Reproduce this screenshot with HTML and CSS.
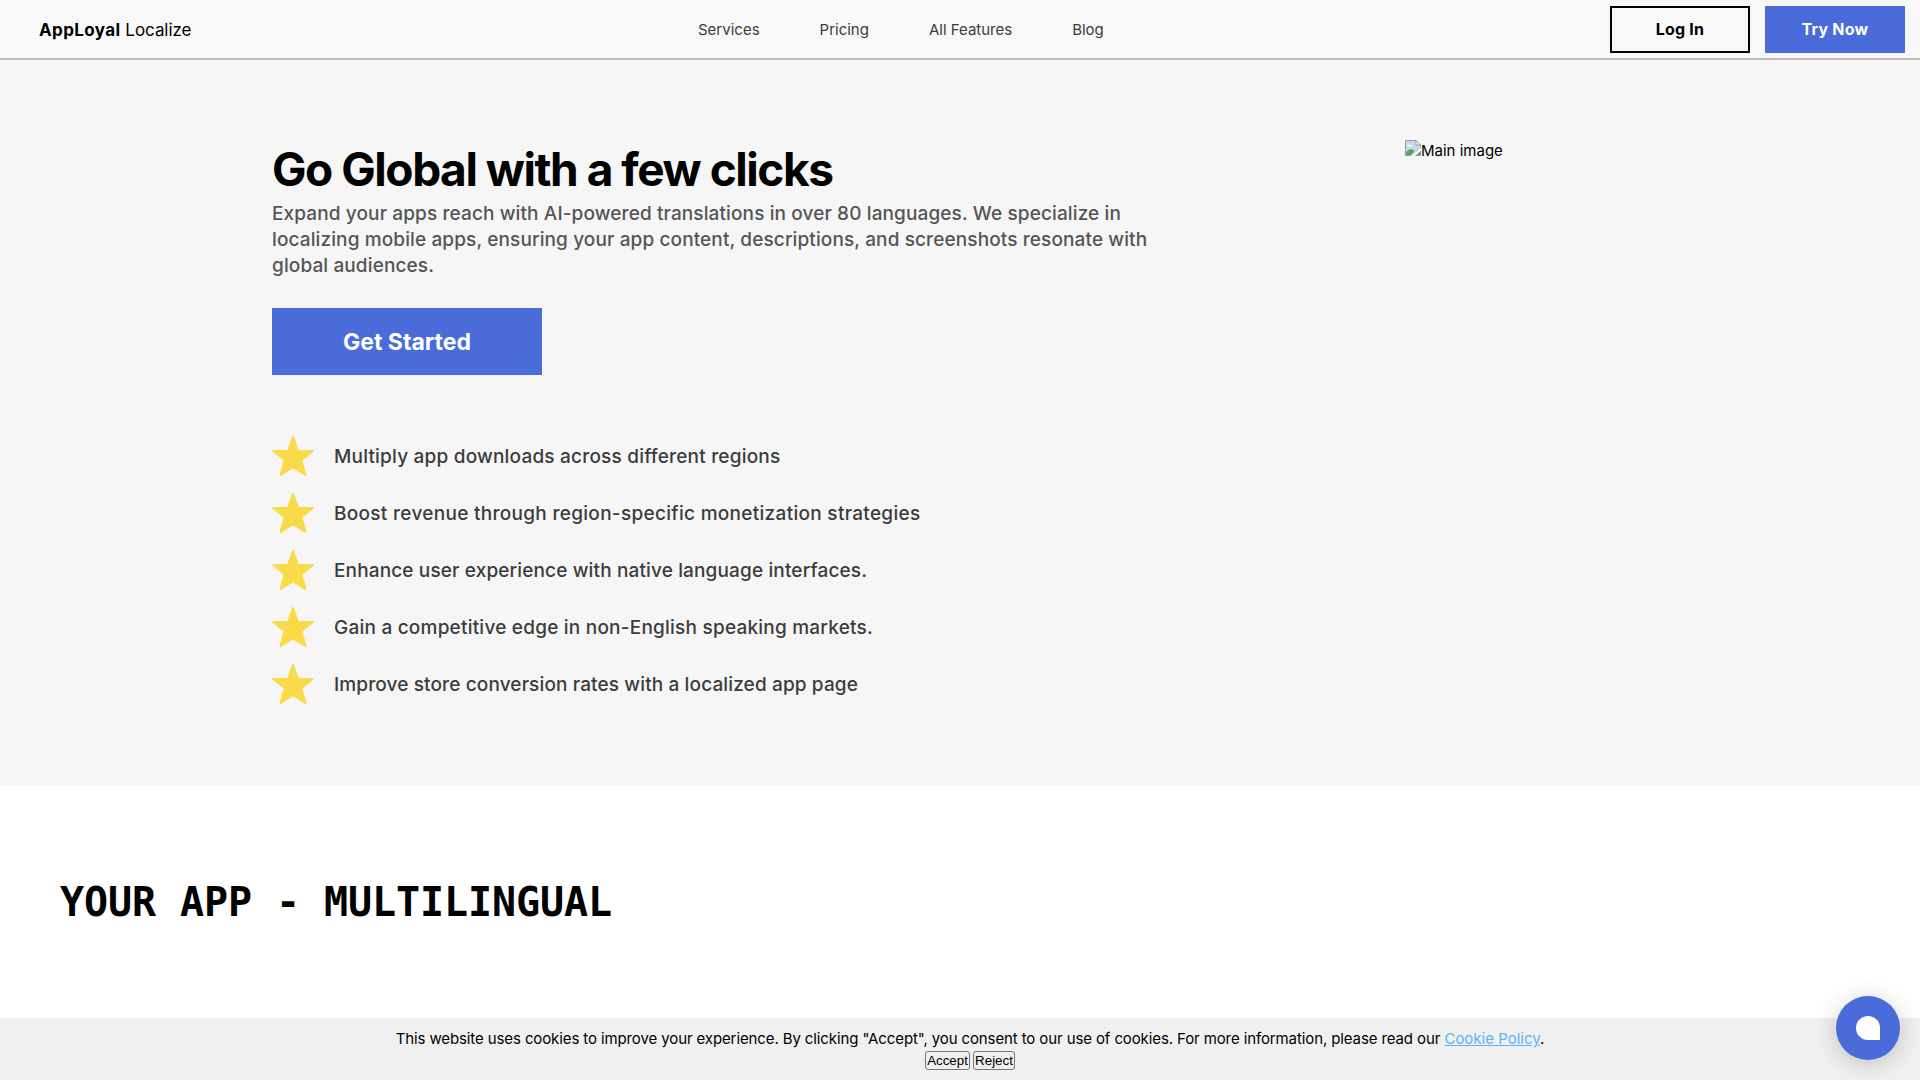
FILE: index.html
```
<!DOCTYPE html>
<html lang="en">
<head>
<meta charset="utf-8">
<title>AppLoyal Localize</title>
<link rel="stylesheet" href="styles.css">
</head>
<body>
<svg class="defs" width="0" height="0" aria-hidden="true">
  <symbol id="star" viewBox="0 0 42 40"><path d="M21 1.200 25.900 15H40.800L29.200 24.100 33.400 38.800 21 31 8.600 38.800 12.800 24.100 1.200 15H16.100Z" fill="#f9db4a" stroke="#f9db4a" stroke-width="2.2" stroke-linejoin="round"/></symbol>
</svg>
<header class="topbar">
  <a class="logo"><b>AppLoyal</b> <span>Localize</span></a>
  <nav class="nav"><a>Services</a><a>Pricing</a><a>All Features</a><a>Blog</a></nav>
  <div class="actions"><a class="btn btn-outline">Log In</a><a class="btn btn-solid">Try Now</a></div>
</header>
<main>
  <section class="hero">
    <div class="hero-copy">
      <h1>Go Global with a few clicks</h1>
      <p class="lead"><span class="l1">Expand your apps reach with AI-powered translations in over 80 languages. We specialize in</span><br><span class="l2">localizing mobile apps, ensuring your app content, descriptions, and screenshots resonate with</span><br><span class="l3">global audiences.</span></p>
      <a class="cta">Get Started</a>
      <ul class="features">
        <li><svg><use href="#star"/></svg><span class="f1">Multiply app downloads across different regions</span></li>
        <li><svg><use href="#star"/></svg><span class="f2">Boost revenue through region-specific monetization strategies</span></li>
        <li><svg><use href="#star"/></svg><span class="f3">Enhance user experience with native language interfaces.</span></li>
        <li><svg><use href="#star"/></svg><span class="f4">Gain a competitive edge in non-English speaking markets.</span></li>
        <li><svg><use href="#star"/></svg><span class="f5">Improve store conversion rates with a localized app page</span></li>
      </ul>
    </div>
    <div class="hero-image">
      <svg width="16" height="16" viewBox="0 0 16 16"><path d="M.5.5H11L15.500 5V15.500H.5Z" fill="#c5d7f5"/><path d="M2.500 6.500c0-2 2-2.500 2.800-1.200 1.500-.3 2 .5 2 1.200Z" fill="#fff"/><path d="M1 15v-2.500C4 8.500 7 8.500 9.500 11L6 15Z" fill="#5aa845"/><path d="M16 7.500 7.500 15.900H9.500L16 10.500Z" fill="#fff"/><path d="M11.500 15 15 11.500V15Z" fill="#5aa845"/><path d="M11 .5V5h4.500Z" fill="#fff"/><path d="M16 5H11V.5H.5v15H6M11 .5 15.500 5V8M10.500 15.500h5V11" fill="none" stroke="#999"/></svg><span>Main image</span>
    </div>
  </section>
  <section class="multilingual"><h2>YOUR APP - MULTILINGUAL</h2></section>
</main>
<div class="cookies">
  <p><span class="notice">This website uses cookies to improve your experience. By clicking "Accept", you consent to our use of cookies. For more information, please read our</span> <a>Cookie Policy</a>.</p>
  <div class="choices"><button class="accept">Accept</button><button class="reject">Reject</button></div>
</div>
<div class="chat"><i></i></div>
</body>
</html>
```
FILE: styles.css
```
* { box-sizing: border-box; }
body { margin: 0; height: 1080px; overflow: hidden; background: #fff; color: #000; font: 15px/20px Inter, sans-serif; }
h1, h2, p, ul { margin: 0; padding: 0; }
.defs { display: block; }
.topbar { display: grid; grid-template-columns: 698px 1fr auto; align-items: center; height: 60px; padding-right: 15px; background: #f8f8f8; border-bottom: 2px solid #bbb; }
.logo { padding: 2px 0 0 39px; font-size: 17px; letter-spacing: -.05px; }
.logo b { letter-spacing: .4px; }
.nav { display: flex; gap: 60px; padding-top: 2px; color: #3c3c3c; }
.actions { display: flex; gap: 15px; }
.btn { display: flex; align-items: center; justify-content: center; width: 140px; height: 47px; padding-bottom: 1px; font-size: 16px; font-weight: 700; letter-spacing: .2px; }
.btn-outline { border: 2px solid #000; }
.btn-solid { background: #4a6bda; color: #fff; }
.hero { display: grid; grid-template-columns: 1133px auto; align-content: start; height: 725px; padding: 80px 272px 0; background: #f6f6f6; }
h1 { padding-top: 4px; font-size: 46px; line-height: 50px; font-weight: 700; letter-spacing: -1.45px; }
.lead { padding-top: 7px; font-size: 19px; line-height: 26px; font-weight: 500; color: #555; }
.l1, .l2, .l3 { letter-spacing: .115px; }
.cta { display: flex; align-items: center; justify-content: center; width: 270px; height: 67px; margin-top: 29px; background: #4a6bda; color: #fff; font-size: 23px; font-weight: 700; }
.features { list-style: none; display: grid; gap: 17px; margin-top: 61px; font-size: 19px; font-weight: 500; color: #3c3c3c; }
.features li { display: flex; align-items: center; gap: 20px; height: 40px; }
.features svg { width: 42px; height: 40px; }
.features span { padding-top: 2px; }
.f1 { letter-spacing: .2px; }
.f2 { letter-spacing: .3px; }
.f3 { letter-spacing: .14px; }
.f4 { letter-spacing: .22px; }
.f5 { letter-spacing: .13px; }
.hero-image { display: flex; align-items: flex-start; }
.hero-image span { padding-top: 1px; }
.multilingual { padding: 90px 60px; }
h2 { font: 700 40px/54px "DejaVu Sans Mono", monospace; letter-spacing: -.08px; }
.cookies { position: fixed; left: 0; right: 0; bottom: 0; height: 62px; padding: 11px 0 0 20px; background: #f0f0f0; text-align: center; }
.notice { letter-spacing: -.11px; }
.cookies a { color: #5bb5f5; text-decoration: underline; }
.choices { display: flex; justify-content: center; gap: 3px; margin: 2px 0 0 0; }
.choices button { height: 19px; padding: 0; border: 1px solid #767676; border-radius: 3px; background: #efefef; color: #000; font: 13.33px/17px "Liberation Sans", sans-serif; }
.accept { width: 45px; }
.reject { width: 42px; }
.chat { position: fixed; right: 20px; bottom: 20px; display: grid; place-items: center; width: 64px; height: 64px; border-radius: 50%; background: #4a6bda; box-shadow: 0 4px 24px rgba(0, 0, 0, .2); }
.chat i { width: 24px; height: 24px; border-radius: 50% 50% 0 50%; background: #fff; }
```
